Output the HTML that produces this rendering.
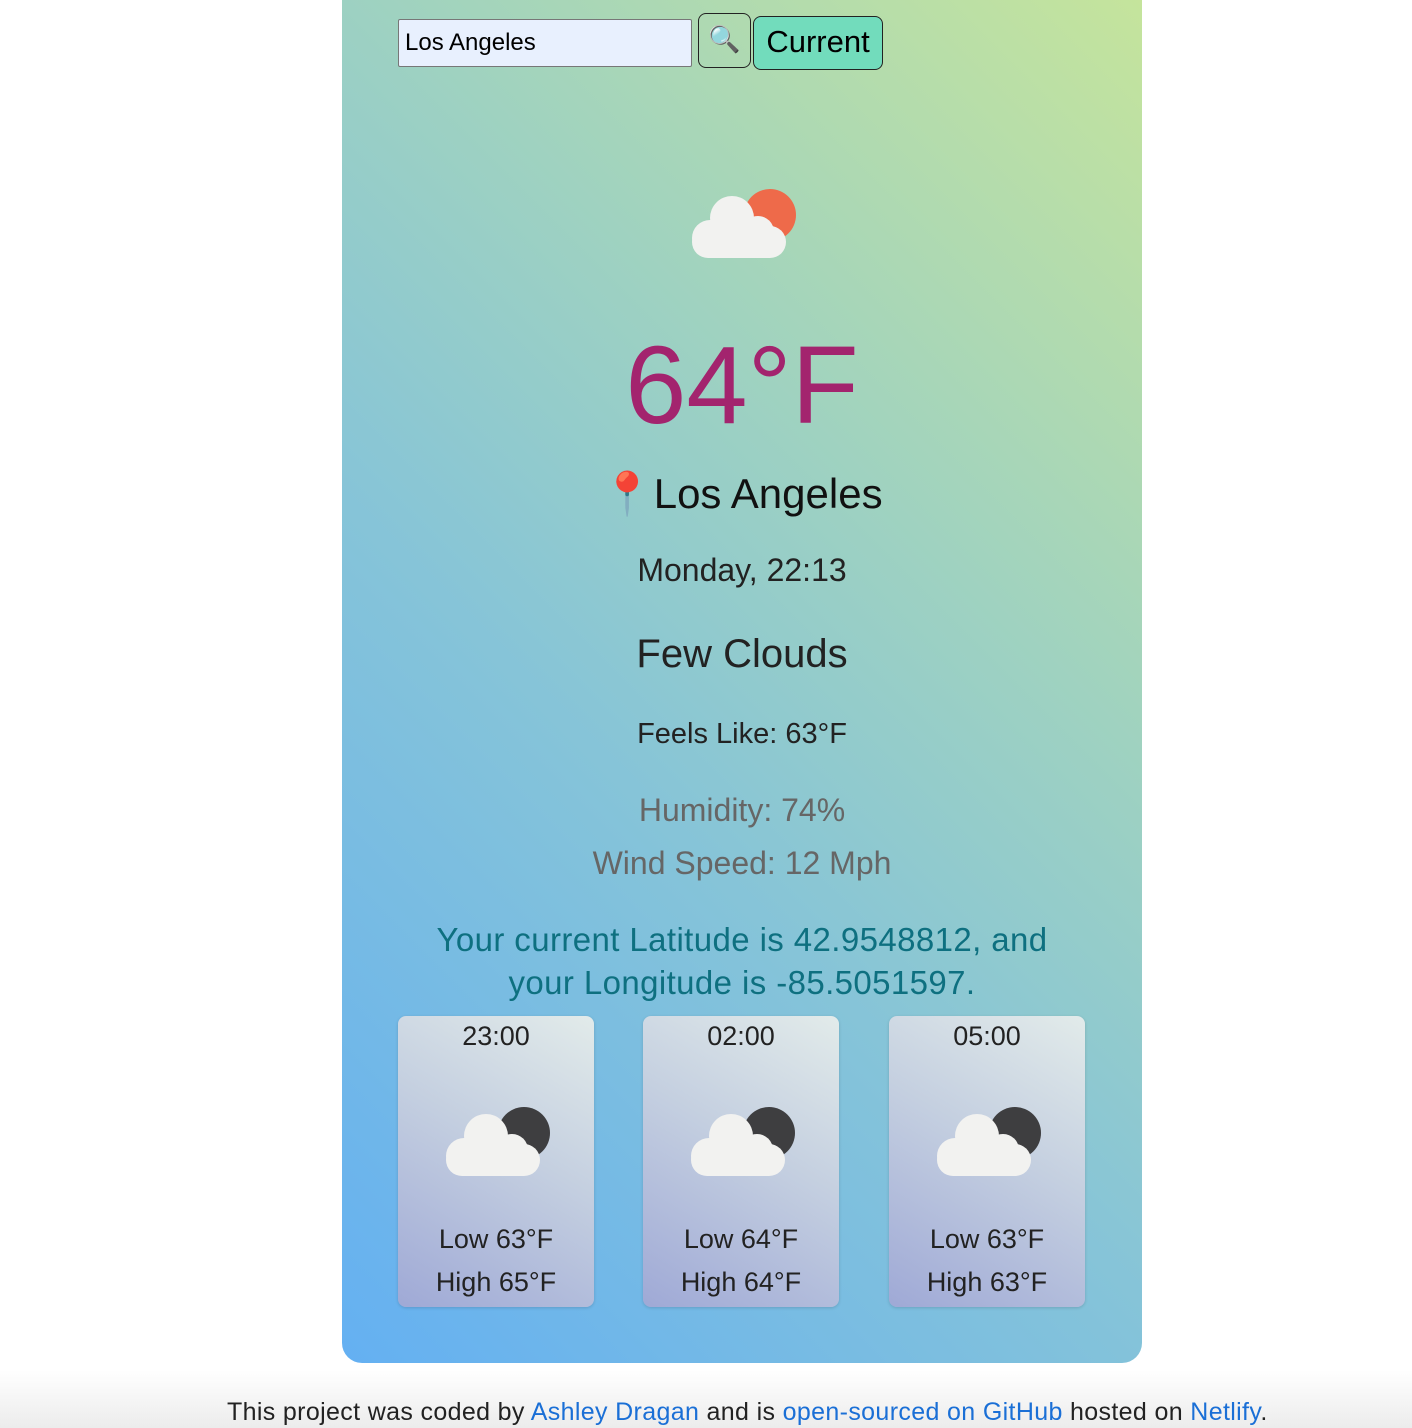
<!DOCTYPE html>
<html><head><style>
body{margin:0;width:1412px;height:1428px;background:#fff;font-family:"Liberation Sans",sans-serif;position:relative;overflow:hidden}
.c{position:absolute;left:342px;top:0;width:800px;height:1363px;border-radius:0 0 20px 20px;background:linear-gradient(225deg,#c5e49c 0%,#9fd2c0 35%,#86c4d8 60%,#64b0f2 100%)}
.t{position:absolute;left:0;width:800px;text-align:center}
input{position:absolute;left:56px;top:19px;border:1px solid #777;border-radius:2px;background:#e8f0fe;font-size:24px;padding:0 6px;font-family:"Liberation Sans",sans-serif;box-sizing:border-box;width:294px;height:48px}
.sb{position:absolute;left:356px;top:13px;width:53px;height:55px;border:1px solid #222;border-radius:8px;box-sizing:border-box;text-align:center;font-size:26px;line-height:50px}
.cb{position:absolute;left:411px;top:16px;width:130px;height:54px;border:1px solid #222;border-radius:8px;box-sizing:border-box;background:#72dcbc;font-size:31px;line-height:50px;text-align:center}
.card{position:absolute;top:1016px;width:196px;height:291px;border-radius:8px;background:linear-gradient(30deg,#9fa9d6 0%,#c4cfe0 55%,#e2ebea 100%);box-shadow:0 1px 3px rgba(0,0,0,.15)}
.card div{position:absolute;left:0;width:196px;text-align:center;font-size:27px;color:#222}
.f{position:absolute;left:0;top:1370px;width:1412px;height:58px;background:linear-gradient(#fff,#ececec)}
.f p{margin:0;position:absolute;top:28px;left:227px;font-size:25px;letter-spacing:0.35px;color:#222;white-space:nowrap}
.f a{color:#1a6fd6;text-decoration:none}
</style></head><body>
<div class="c">
<input value="Los Angeles">
<div class="sb">🔍</div>
<div class="cb">Current</div>
<svg style="position:absolute;left:348px;top:188px" width="108" height="72" viewBox="0 0 108 72">
<circle cx="80" cy="27" r="26" fill="#ee6a4a"/>
<g fill="#f2f2f0"><rect x="2" y="38" width="94" height="32" rx="16"/><circle cx="42" cy="30" r="22"/><circle cx="68" cy="44" r="16"/><circle cx="20" cy="50" r="18"/></g></svg>
<div class="t" style="top:322px;font-size:110px;color:#a3246e">64°F</div>
<div class="t" style="top:470px;font-size:42px;color:#111">📍Los Angeles</div>
<div class="t" style="top:552px;font-size:32px;color:#222">Monday, 22:13</div>
<div class="t" style="top:632px;font-size:40px;color:#222">Few Clouds</div>
<div class="t" style="top:718px;font-size:29px;color:#222">Feels Like: 63°F</div>
<div class="t" style="top:792px;font-size:32px;color:#666">Humidity: 74%</div>
<div class="t" style="top:845px;font-size:32px;color:#666">Wind Speed: 12 Mph</div>
<div class="t" style="top:918px;font-size:33px;letter-spacing:0.4px;color:#0e7080;line-height:43px">Your current Latitude is 42.9548812, and<br>your Longitude is -85.5051597.</div>
<div class="card" style="left:56px"><div style="top:5px">23:00</div><svg style="position:absolute;left:46px;top:90px" width="108" height="72" viewBox="0 0 108 72"><circle cx="80" cy="27" r="26" fill="#3e3e40"/><g fill="#f2f2f0"><rect x="2" y="38" width="94" height="32" rx="16"/><circle cx="42" cy="30" r="22"/><circle cx="68" cy="44" r="16"/><circle cx="20" cy="50" r="18"/></g></svg><div style="top:208px">Low 63°F</div><div style="top:251px">High 65°F</div></div>
<div class="card" style="left:301px"><div style="top:5px">02:00</div><svg style="position:absolute;left:46px;top:90px" width="108" height="72" viewBox="0 0 108 72"><circle cx="80" cy="27" r="26" fill="#3e3e40"/><g fill="#f2f2f0"><rect x="2" y="38" width="94" height="32" rx="16"/><circle cx="42" cy="30" r="22"/><circle cx="68" cy="44" r="16"/><circle cx="20" cy="50" r="18"/></g></svg><div style="top:208px">Low 64°F</div><div style="top:251px">High 64°F</div></div>
<div class="card" style="left:547px"><div style="top:5px">05:00</div><svg style="position:absolute;left:46px;top:90px" width="108" height="72" viewBox="0 0 108 72"><circle cx="80" cy="27" r="26" fill="#3e3e40"/><g fill="#f2f2f0"><rect x="2" y="38" width="94" height="32" rx="16"/><circle cx="42" cy="30" r="22"/><circle cx="68" cy="44" r="16"/><circle cx="20" cy="50" r="18"/></g></svg><div style="top:208px">Low 63°F</div><div style="top:251px">High 63°F</div></div>
</div>
<div class="f"><p>This project was coded by <a>Ashley Dragan</a> and is <a>open-sourced on GitHub</a> hosted on <a>Netlify</a>.</p></div>
</body></html>
